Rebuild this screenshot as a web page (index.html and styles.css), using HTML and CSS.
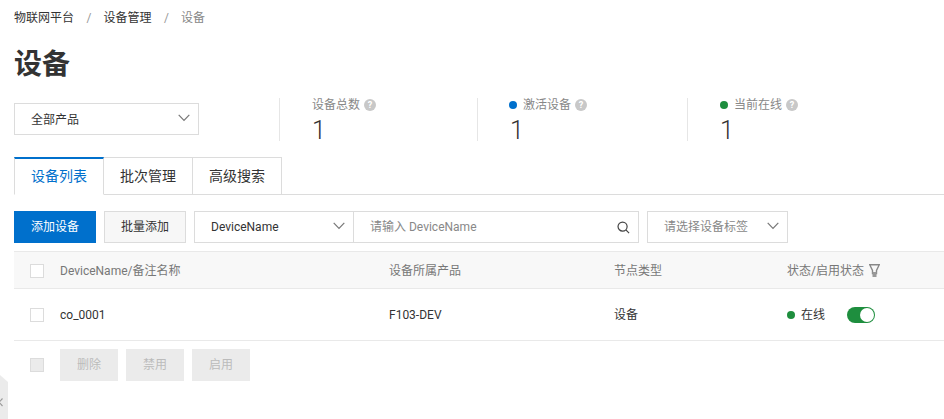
FILE: index.html
```html
<!DOCTYPE html>
<html lang="zh">
<head>
<meta charset="utf-8">
<title>设备</title>
<link rel="stylesheet" href="styles.css">
</head>
<body>
<main class="page">
  <nav class="crumbs"><span>物联网平台</span><i>/</i><span>设备管理</span><i>/</i><span class="cur">设备</span></nav>
  <h1 class="title">设备</h1>
  <section class="summary">
    <div class="select product"><span>全部产品</span><svg class="chev" viewBox="0 0 12 8"><path d="M.7.9 6 6.4 11.3.9"/></svg></div>
    <div class="stats">
      <div class="stat s1"><div class="label">设备总数<b class="q">?</b></div><div class="num">1</div></div>
      <div class="stat s2"><div class="label"><em class="dot blue"></em>激活设备<b class="q">?</b></div><div class="num">1</div></div>
      <div class="stat s3"><div class="label"><em class="dot green"></em>当前在线<b class="q">?</b></div><div class="num">1</div></div>
    </div>
  </section>
  <div class="tabs"><div class="tab active">设备列表</div><div class="tab">批次管理</div><div class="tab">高级搜索</div></div>
  <div class="toolbar">
    <button class="btn primary">添加设备</button>
    <button class="btn plain">批量添加</button>
    <div class="combo">
      <div class="select field"><span>DeviceName</span><svg class="chev" viewBox="0 0 12 8"><path d="M.7.9 6 6.4 11.3.9"/></svg></div>
      <div class="search"><span>请输入 DeviceName</span><svg class="mag" viewBox="0 0 14 14"><circle cx="6" cy="6" r="4.9"/><path d="M9.6 9.6 13 13"/></svg></div>
    </div>
    <div class="select tag"><span>请选择设备标签</span><svg class="chev" viewBox="0 0 12 8"><path d="M.7.9 6 6.4 11.3.9"/></svg></div>
  </div>
  <div class="table">
    <div class="row head">
      <div class="cell"><span class="check"></span></div>
      <div class="cell">DeviceName/备注名称</div>
      <div class="cell">设备所属产品</div>
      <div class="cell">节点类型</div>
      <div class="cell">状态/启用状态<svg class="filter" viewBox="0 0 11 13"><path class="funnel" d="M.7.7h9.600L7.500 6.500v3h-4v-3z"/><path class="stem" d="M3.500 8h4v5h-4z"/></svg></div>
    </div>
    <div class="row body">
      <div class="cell"><span class="check"></span></div>
      <div class="cell">co_0001</div>
      <div class="cell">F103-DEV</div>
      <div class="cell">设备</div>
      <div class="cell"><em class="dot green state"></em>在线<span class="switch"><span class="knob"></span></span></div>
    </div>
  </div>
  <div class="footer">
    <span class="check disabled"></span>
    <button class="btn off">删除</button><button class="btn off">禁用</button><button class="btn off">启用</button>
  </div>
</main>
<div class="handle"><svg viewBox="0 0 8 14"><path d="M6 2 1.500 7 6 12"/></svg></div>
</body>
</html>
```
FILE: styles.css
```css
* { box-sizing: border-box; }
html, body { margin: 0; height: 100%; overflow: hidden; background: #fff; }
body { font: 12px/18px Roboto, "Noto Sans CJK SC", sans-serif; color: #333; }
.page { padding: 9px 0 0 14px; width: 944px; }
.crumbs { display: flex; height: 18px; color: #333; }
.crumbs i { font-style: normal; color: #999; margin: 0 12px 0 12.5px; }
.crumbs .cur { color: #888; }
.title { margin: 20px 0 0; font-size: 28px; line-height: 36px; font-weight: 700; color: #333; }
.summary { display: flex; margin-top: 15px; height: 43px; }
.select { display: flex; align-items: center; justify-content: space-between; height: 32px; border: 1px solid #dcdcdc; background: #fff; padding: 0 8px 0 16px; }
.chev { width: 12px; height: 8px; fill: none; stroke: #777; stroke-width: 1.2; margin-top: -3px; }
.product { width: 185px; margin-top: 5px; padding-top: 2px; }
.product .chev { margin-top: -5px; }
.stats { display: flex; margin-left: 80px; }
.stat { border-left: 1px solid #e6e6e6; padding-left: 32px; }
.s1 { width: 198px; }
.s2 { width: 210px; }
.s2 .dot { margin-left: -1px; margin-right: 6px; }
.label { display: flex; align-items: center; height: 14px; color: #888; }
.q { display: inline-flex; align-items: center; justify-content: center; width: 12px; height: 12px; margin-left: 4px; border-radius: 50%; background: #c8c8c8; color: #fff; font-size: 9px; line-height: 12px; }
.num { font-size: 25px; line-height: 26px; margin-top: 6px; color: #333; font-weight: 300; }
.dot { display: inline-block; width: 8px; height: 8px; border-radius: 50%; margin-right: 6px; }
.blue { background: #0070cc; }
.green { background: #1e8e3e; }
.tabs { display: flex; margin-top: 16px; height: 38px; border-bottom: 1px solid #dcdcdc; }
.tab { width: 89px; height: 38px; border: 1px solid #dcdcdc; border-left: 0; font-size: 14px; line-height: 36px; text-align: center; color: #333; }
.tab.active { width: 90px; color: #0070cc; background: #fff; border-top: 2px solid #0070cc; border-left: 1px solid #dcdcdc; border-bottom-color: #fff; line-height: 35px; }
.toolbar { display: flex; align-items: center; margin-top: 16px; gap: 8px; height: 32px; }
.btn { height: 32px; width: 82px; padding: 0; font: inherit; border: 1px solid #dcdcdc; cursor: pointer; }
.primary { background: #0070cc; border-color: #0070cc; color: #fff; }
.plain { background: #f7f7f7; color: #333; }
.combo { display: flex; }
.field { width: 160px; padding-left: 16px; }
.search { display: flex; align-items: center; justify-content: space-between; width: 286px; height: 32px; margin-left: -1px; padding: 0 8px 0 16px; border: 1px solid #dcdcdc; color: #888; }
.mag { width: 13px; height: 13px; fill: none; stroke: #444; stroke-width: 1.300; }
.tag { width: 141px; color: #888; }
.table { margin-top: 8px; }
.row { display: grid; grid-template-columns: 46px 329px 225px 173px 1fr; align-items: center; border-bottom: 1px solid #e9e9e9; }
.head { height: 38px; padding-top: 1px; background: #f8f8f8; border-top: 1px solid #e9e9e9; color: #777; }
.body { height: 52px; color: #333; }
.cell { display: flex; align-items: center; }
.cell:first-child { padding-left: 16px; }
.check { display: inline-block; width: 14px; height: 14px; border: 1px solid #dcdcdc; background: #fff; }
.check.disabled { background: #ebebeb; }
.filter { flex: none; width: 11px; height: 13px; margin-left: 5px; }
.funnel { fill: none; stroke: #888; stroke-width: 1.400; }
.stem { fill: #999; }
.state { margin-right: 6px; }
.switch { position: relative; display: inline-block; width: 28px; height: 16px; margin-left: 22px; border-radius: 8px; background: #1e8e3e; }
.knob { position: absolute; right: 1px; top: 1px; width: 14px; height: 14px; border-radius: 50%; background: #fff; }
.footer { display: flex; align-items: center; gap: 8px; margin-top: 8px; height: 32px; padding-left: 16px; }
.footer .check { margin-right: 8px; }
.off { width: 58px; background: #ebebeb; border-color: #ebebeb; color: #bbb; }
.handle { position: fixed; left: 0; bottom: 0; width: 8px; height: 44px; background: #ebebeb; clip-path: polygon(0 0, 100% 16%, 100% 100%, 0 100%); }
.handle svg { display: block; width: 6px; margin: 22px 0 0 -2px; fill: none; stroke: #999; stroke-width: 1.500; }
```
